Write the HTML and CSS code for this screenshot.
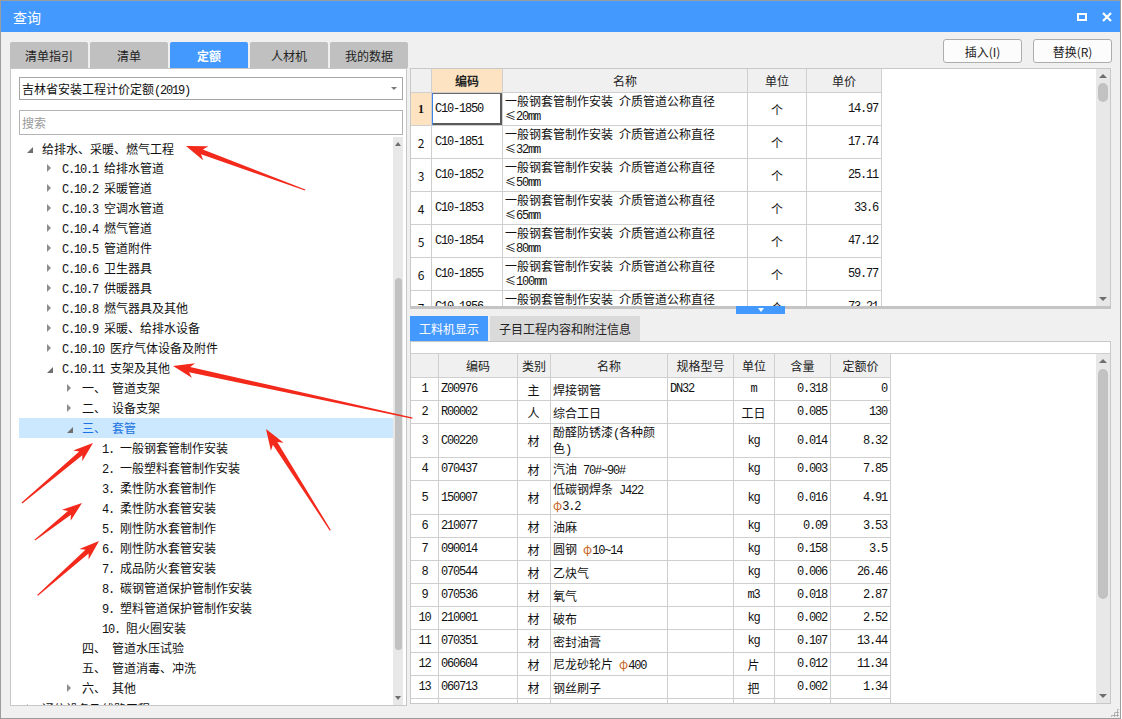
FILE: index.html
```html
<!DOCTYPE html>
<html lang="zh-CN">
<head>
<meta charset="utf-8">
<title>查询</title>
<link rel="stylesheet" href="styles.css">
</head>
<body>
<div class="window">
  <div class="titlebar">
    <span class="title">查询</span>
    <div class="winbtns">
      <span class="ic-max"></span>
      <svg class="ic-close" width="10" height="10" viewBox="0 0 10 10"><path d="M1 1L9 9M9 1L1 9" stroke="#fff" stroke-width="2.2" fill="none"/></svg>
    </div>
  </div>

  <div class="toprow">
    <div class="tabs">
      <div class="tab">清单指引</div>
      <div class="tab">清单</div>
      <div class="tab active">定额</div>
      <div class="tab">人材机</div>
      <div class="tab">我的数据</div>
    </div>
    <div class="btns">
      <button class="btn">插入(I)</button>
      <button class="btn">替换(R)</button>
    </div>
  </div>

  <div class="main">
    <div class="left">
      <div class="combo"><span>吉林省安装工程计价定额<span class="m">(2019)</span></span><i class="caret"></i></div>
      <div class="search">搜索</div>
      <div class="tree">
        <div class="tree-list">
          <div class="node l0"><i class="tg open"></i><span class="tx">给排水、采暖、燃气工程</span></div>
          <div class="node l1"><i class="tg shut"></i><span class="tx"><span class="m">C.10.1 </span>给排水管道</span></div>
          <div class="node l1"><i class="tg shut"></i><span class="tx"><span class="m">C.10.2 </span>采暖管道</span></div>
          <div class="node l1"><i class="tg shut"></i><span class="tx"><span class="m">C.10.3 </span>空调水管道</span></div>
          <div class="node l1"><i class="tg shut"></i><span class="tx"><span class="m">C.10.4 </span>燃气管道</span></div>
          <div class="node l1"><i class="tg shut"></i><span class="tx"><span class="m">C.10.5 </span>管道附件</span></div>
          <div class="node l1"><i class="tg shut"></i><span class="tx"><span class="m">C.10.6 </span>卫生器具</span></div>
          <div class="node l1"><i class="tg shut"></i><span class="tx"><span class="m">C.10.7 </span>供暖器具</span></div>
          <div class="node l1"><i class="tg shut"></i><span class="tx"><span class="m">C.10.8 </span>燃气器具及其他</span></div>
          <div class="node l1"><i class="tg shut"></i><span class="tx"><span class="m">C.10.9 </span>采暖、给排水设备</span></div>
          <div class="node l1"><i class="tg shut"></i><span class="tx"><span class="m">C.10.10 </span>医疗气体设备及附件</span></div>
          <div class="node l1"><i class="tg open"></i><span class="tx"><span class="m">C.10.11 </span>支架及其他</span></div>
          <div class="node l2"><i class="tg shut"></i><span class="tx">一、<span class="m"> </span>管道支架</span></div>
          <div class="node l2"><i class="tg shut"></i><span class="tx">二、<span class="m"> </span>设备支架</span></div>
          <div class="node l2 sel"><i class="tg open"></i><span class="tx">三、<span class="m"> </span>套管</span></div>
          <div class="node l3"><i class="tg"></i><span class="tx"><span class="m">1. </span>一般钢套管制作安装</span></div>
          <div class="node l3"><i class="tg"></i><span class="tx"><span class="m">2. </span>一般塑料套管制作安装</span></div>
          <div class="node l3"><i class="tg"></i><span class="tx"><span class="m">3. </span>柔性防水套管制作</span></div>
          <div class="node l3"><i class="tg"></i><span class="tx"><span class="m">4. </span>柔性防水套管安装</span></div>
          <div class="node l3"><i class="tg"></i><span class="tx"><span class="m">5. </span>刚性防水套管制作</span></div>
          <div class="node l3"><i class="tg"></i><span class="tx"><span class="m">6. </span>刚性防水套管安装</span></div>
          <div class="node l3"><i class="tg"></i><span class="tx"><span class="m">7. </span>成品防火套管安装</span></div>
          <div class="node l3"><i class="tg"></i><span class="tx"><span class="m">8. </span>碳钢管道保护管制作安装</span></div>
          <div class="node l3"><i class="tg"></i><span class="tx"><span class="m">9. </span>塑料管道保护管制作安装</span></div>
          <div class="node l3"><i class="tg"></i><span class="tx"><span class="m">10. </span>阻火圈安装</span></div>
          <div class="node l2"><i class="tg"></i><span class="tx">四、<span class="m"> </span>管道水压试验</span></div>
          <div class="node l2"><i class="tg"></i><span class="tx">五、<span class="m"> </span>管道消毒、冲洗</span></div>
          <div class="node l2"><i class="tg shut"></i><span class="tx">六、<span class="m"> </span>其他</span></div>
          <div class="node l0"><i class="tg shut"></i><span class="tx">通信设备及线路工程</span></div>
        </div>
        <div class="vs vs-tree"><i class="sa up"></i><div class="trk"><div class="th"></div></div><i class="sa dn"></i></div>
      </div>
    </div>

    <div class="right">
      <div class="upper">
        <div class="gridwrap">
          <table class="grid up">
            <colgroup><col class="c0"><col class="c1"><col class="c2"><col class="c3"><col class="c4"></colgroup>
            <thead>
              <tr><th></th><th class="hot">编码</th><th>名称</th><th>单位</th><th>单价</th></tr>
            </thead>
            <tbody>
              <tr><td class="rn hotn">1</td><td class="m cur">C10-1850</td><td class="nm">一般钢套管制作安装<span class="sp"></span>介质管道公称直径<br><span class="l2t">≤<span class="m">20mm</span></span></td><td class="ct">个</td><td class="m rt">14.97</td></tr>
              <tr><td class="rn">2</td><td class="m">C10-1851</td><td class="nm">一般钢套管制作安装<span class="sp"></span>介质管道公称直径<br><span class="l2t">≤<span class="m">32mm</span></span></td><td class="ct">个</td><td class="m rt">17.74</td></tr>
              <tr><td class="rn">3</td><td class="m">C10-1852</td><td class="nm">一般钢套管制作安装<span class="sp"></span>介质管道公称直径<br><span class="l2t">≤<span class="m">50mm</span></span></td><td class="ct">个</td><td class="m rt">25.11</td></tr>
              <tr><td class="rn">4</td><td class="m">C10-1853</td><td class="nm">一般钢套管制作安装<span class="sp"></span>介质管道公称直径<br><span class="l2t">≤<span class="m">65mm</span></span></td><td class="ct">个</td><td class="m rt">33.6</td></tr>
              <tr><td class="rn">5</td><td class="m">C10-1854</td><td class="nm">一般钢套管制作安装<span class="sp"></span>介质管道公称直径<br><span class="l2t">≤<span class="m">80mm</span></span></td><td class="ct">个</td><td class="m rt">47.12</td></tr>
              <tr><td class="rn">6</td><td class="m">C10-1855</td><td class="nm">一般钢套管制作安装<span class="sp"></span>介质管道公称直径<br><span class="l2t">≤<span class="m">100mm</span></span></td><td class="ct">个</td><td class="m rt">59.77</td></tr>
              <tr><td class="rn">7</td><td class="m">C10-1856</td><td class="nm">一般钢套管制作安装<span class="sp"></span>介质管道公称直径<br><span class="l2t">≤<span class="m">125mm</span></span></td><td class="ct">个</td><td class="m rt">73.21</td></tr>
            </tbody>
          </table>
        </div>
        <div class="vs vs-up"><i class="sa up"></i><div class="trk"><div class="th"></div></div><i class="sa dn"></i></div>
      </div>

      <div class="splitter"><div class="handle"><i></i></div></div>

      <div class="ltabs">
        <div class="ltab active">工料机显示</div>
        <div class="ltab wide">子目工程内容和附注信息</div>
      </div>

      <div class="lower">
        <div class="strip"></div>
        <div class="lbody">
          <div class="gridwrap">
            <table class="grid lo">
              <colgroup><col class="d0"><col class="d1"><col class="d2"><col class="d3"><col class="d4"><col class="d5"><col class="d6"><col class="d7"></colgroup>
              <thead>
                <tr><th></th><th>编码</th><th>类别</th><th>名称</th><th>规格型号</th><th>单位</th><th>含量</th><th>定额价</th></tr>
              </thead>
              <tbody>
                <tr><td class="rn m">1</td><td class="m">Z00976</td><td class="ct">主</td><td>焊接钢管</td><td class="m">DN32</td><td class="ct m">m</td><td class="m rt">0.318</td><td class="m rt">0</td></tr>
                <tr><td class="rn m">2</td><td class="m">R00002</td><td class="ct">人</td><td>综合工日</td><td></td><td class="ct">工日</td><td class="m rt">0.085</td><td class="m rt">130</td></tr>
                <tr class="dbl"><td class="rn m">3</td><td class="m">C00220</td><td class="ct">材</td><td class="wr">酚醛防锈漆<span class="m">(</span>各种颜<br>色<span class="m">)</span></td><td></td><td class="ct m">kg</td><td class="m rt">0.014</td><td class="m rt">8.32</td></tr>
                <tr><td class="rn m">4</td><td class="m">070437</td><td class="ct">材</td><td>汽油<span class="m"> 70#~90#</span></td><td></td><td class="ct m">kg</td><td class="m rt">0.003</td><td class="m rt">7.85</td></tr>
                <tr class="dbl"><td class="rn m">5</td><td class="m">150007</td><td class="ct">材</td><td class="wr">低碳钢焊条<span class="m"> J422</span><br><span class="phi">φ</span><span class="m">3.2</span></td><td></td><td class="ct m">kg</td><td class="m rt">0.016</td><td class="m rt">4.91</td></tr>
                <tr><td class="rn m">6</td><td class="m">210077</td><td class="ct">材</td><td>油麻</td><td></td><td class="ct m">kg</td><td class="m rt">0.09</td><td class="m rt">3.53</td></tr>
                <tr><td class="rn m">7</td><td class="m">090014</td><td class="ct">材</td><td>圆钢<span class="m"> </span><span class="phi">φ</span><span class="m">10~14</span></td><td></td><td class="ct m">kg</td><td class="m rt">0.158</td><td class="m rt">3.5</td></tr>
                <tr><td class="rn m">8</td><td class="m">070544</td><td class="ct">材</td><td>乙炔气</td><td></td><td class="ct m">kg</td><td class="m rt">0.006</td><td class="m rt">26.46</td></tr>
                <tr><td class="rn m">9</td><td class="m">070536</td><td class="ct">材</td><td>氧气</td><td></td><td class="ct m">m3</td><td class="m rt">0.018</td><td class="m rt">2.87</td></tr>
                <tr><td class="rn m">10</td><td class="m">210001</td><td class="ct">材</td><td>破布</td><td></td><td class="ct m">kg</td><td class="m rt">0.002</td><td class="m rt">2.52</td></tr>
                <tr><td class="rn m">11</td><td class="m">070351</td><td class="ct">材</td><td>密封油膏</td><td></td><td class="ct m">kg</td><td class="m rt">0.107</td><td class="m rt">13.44</td></tr>
                <tr><td class="rn m">12</td><td class="m">060604</td><td class="ct">材</td><td>尼龙砂轮片<span class="m"> </span><span class="phi">φ</span><span class="m">400</span></td><td></td><td class="ct">片</td><td class="m rt">0.012</td><td class="m rt">11.34</td></tr>
                <tr><td class="rn m">13</td><td class="m">060713</td><td class="ct">材</td><td>钢丝刷子</td><td></td><td class="ct">把</td><td class="m rt">0.002</td><td class="m rt">1.34</td></tr>
                <tr class="cut"><td></td><td></td><td></td><td></td><td></td><td></td><td></td><td></td></tr>
              </tbody>
            </table>
          </div>
          <div class="vs vs-lo"><i class="sa up"></i><div class="trk"><div class="th"></div></div><i class="sa dn"></i></div>
        </div>
      </div>
    </div>
  </div>
  <i class="grip"></i>
</div>

<svg class="arrows" width="1122" height="719" viewBox="0 0 1122 719">
  <g fill="#f2291b">
    <polygon transform="translate(186,146) rotate(200.3)" points="0,0 -21,-7.5 -17,-2.6 -127,-0.6 -127,0.6 -17,2.6 -21,7.5"/>
    <polygon transform="translate(173,366) rotate(192.3)" points="0,0 -21,-7.5 -17,-2.6 -245,-0.6 -245,0.6 -17,2.6 -21,7.5"/>
    <polygon transform="translate(266,429) rotate(237.6)" points="0,0 -21,-7.5 -17,-2.6 -120,-0.6 -120,0.6 -17,2.6 -21,7.5"/>
    <polygon transform="translate(93,443) rotate(-40.2)" points="0,0 -20,-7 -16,-2.4 -93,-0.6 -93,0.6 -16,2.4 -20,7"/>
    <polygon transform="translate(82,503) rotate(-38.2)" points="0,0 -20,-7 -16,-2.4 -60,-0.6 -60,0.6 -16,2.4 -20,7"/>
    <polygon transform="translate(99,541) rotate(-41.5)" points="0,0 -20,-7 -16,-2.4 -82,-0.6 -82,0.6 -16,2.4 -20,7"/>
  </g>
</svg>
</body>
</html>
```

FILE: styles.css
```css
* { box-sizing: border-box; margin: 0; padding: 0; }

body {
  width: 1122px;
  height: 719px;
  overflow: hidden;
  position: relative;
  background: #ffffff;
  font-family: "Noto Sans CJK SC", "Noto Sans", sans-serif;
  font-size: 12px;
  color: #1a1a1a;
}

.window {
  width: 1121px;
  height: 719px;
  border: 1px solid #9c9c9c;
  background: #f0f0f0;
  display: flex;
  flex-direction: column;
  position: relative;
  overflow: hidden;
}

/* title bar */
.titlebar {
  height: 31px;
  flex-shrink: 0;
  background: #4499ff;
  color: #fff;
  display: flex;
  align-items: center;
  padding: 0 8px 0 12px;
  font-size: 14px;
}
.title { flex: 1; }
.winbtns { display: flex; align-items: center; gap: 15px; }
.ic-max { width: 10px; height: 8px; border: 2px solid #fff; display: block; }
.ic-close { display: block; }

/* top row */
.toprow {
  height: 36px;
  flex-shrink: 0;
  display: flex;
  justify-content: space-between;
  padding: 0 8px 0 9px;
}
.tabs { display: flex; gap: 2px; align-self: flex-end; }
.tab {
  width: 78px;
  height: 26px;
  background: #c0c0c0;
  border-radius: 2px 2px 0 0;
  display: flex;
  align-items: center;
  justify-content: center;
  color: #222;
}
.tab.active { background: #4499ff; color: #fff; font-weight: bold; }

.btns { display: flex; gap: 11px; margin-top: 7px; }
.btn {
  width: 79px;
  height: 24px;
  border: 1px solid #adadad;
  border-radius: 3px;
  background: #fcfcfc;
  font-family: "Noto Sans CJK SC", "Noto Sans", sans-serif;
  font-size: 12px;
  color: #222;
}

/* main */
.main {
  height: 638px;
  flex-shrink: 0;
  display: flex;
  padding-left: 9px;
}

.left {
  width: 397px;
  height: 638px;
  border: 1px solid #c6c6c6;
  background: #fff;
  padding: 8px 3px 0 8px;
  display: flex;
  flex-direction: column;
}
.combo {
  height: 23px;
  flex-shrink: 0;
  border: 1px solid #a6a6a6;
  display: flex;
  align-items: center;
  justify-content: space-between;
  padding: 0 5px 0 2px;
  color: #111;
}
.caret {
  width: 0; height: 0;
  border-top: 3px solid #7a7a7a;
  border-left: 3px solid transparent;
  border-right: 3px solid transparent;
}
.search {
  height: 25px;
  flex-shrink: 0;
  margin-top: 10px;
  border: 1px solid #b4b4b4;
  display: flex;
  align-items: center;
  padding-left: 2px;
  color: #9a9a9a;
}
.tree {
  margin-top: 2px;
  flex: 1;
  min-height: 0;
  display: flex;
}
.tree-list {
  flex: 1;
  overflow: hidden;
  padding-top: 1px;
}
.node {
  height: 20px;
  display: flex;
  align-items: center;
  white-space: nowrap;
  color: #111;
}
.l0 { padding-left: 8px; }
.l1 { padding-left: 28px; }
.l2 { padding-left: 48px; }
.l3 { padding-left: 68px; }
.node.sel { background: #cce8ff; color: #1a73e0; }
.tg {
  width: 15px;
  height: 20px;
  flex-shrink: 0;
  display: flex;
  align-items: center;
}
.tg.shut::before {
  content: "";
  width: 0; height: 0;
  border-left: 4px solid #8c8c8c;
  border-top: 4px solid transparent;
  border-bottom: 4px solid transparent;
}
.tg.open::before {
  content: "";
  width: 0; height: 0;
  margin-top: 3px;
  border-bottom: 6px solid #6e6e6e;
  border-left: 6px solid transparent;
}

.m {
  font-family: "Liberation Mono", monospace;
  font-size: 12px;
  letter-spacing: -1.2px;
  white-space: pre;
}
.sp { display: inline-block; width: 6px; }

/* scrollbars */
.vs {
  width: 14px;
  flex-shrink: 0;
  background: #e8e8e8;
  display: flex;
  flex-direction: column;
  align-items: center;
}
.sa {
  height: 14px;
  width: 100%;
  flex-shrink: 0;
  display: flex;
  align-items: center;
  justify-content: center;
}
.sa.up::before {
  content: "";
  border-bottom: 4px solid #6e6e6e;
  border-left: 4px solid transparent;
  border-right: 4px solid transparent;
}
.sa.dn::before {
  content: "";
  border-top: 4px solid #6e6e6e;
  border-left: 4px solid transparent;
  border-right: 4px solid transparent;
}
.trk { flex: 1; width: 100%; display: flex; justify-content: center; }
.th { width: 10px; border-radius: 5px; background: #c2c2c2; }

.vs-tree { width: 10px; }
.vs-tree .sa.up::before, .vs-tree .sa.dn::before { border-left-width: 3px; border-right-width: 3px; }
.vs-tree .th { width: 7px; height: 372px; margin-top: 127px; border-radius: 4px; }
.vs-up .th { height: 19px; }
.vs-lo .th { height: 230px; margin-top: 1px; }

/* right */
.right {
  width: 701px;
  height: 636px;
  margin-left: 3px;
  display: flex;
  flex-direction: column;
}
.upper {
  height: 238px;
  flex-shrink: 0;
  border: 1px solid #c8c8c8;
  border-bottom: none;
  background: #fff;
  display: flex;
}
.gridwrap { flex: 1; overflow: hidden; background: #fff; }

.grid {
  border-collapse: separate;
  border-spacing: 0;
  table-layout: fixed;
  font-size: 12px;
  color: #111;
}
.grid th, .grid td {
  border-right: 1px solid #cfcfcf;
  border-bottom: 1px solid #cfcfcf;
  padding: 0 3px;
  white-space: nowrap;
  overflow: hidden;
  font-weight: normal;
  vertical-align: middle;
  text-align: left;
}
.grid th { background: #f0f0f0; text-align: center; color: #222; }
.grid .ct { text-align: center; }
.grid .rt { text-align: right; }
.grid .rn { text-align: center; padding: 0; }

.up { width: 471px; }
.up .c0 { width: 21px; }
.up .c1 { width: 71px; }
.up .c2 { width: 245px; }
.up .c3 { width: 59px; }
.up .c4 { width: 75px; }
.up thead tr { height: 24px; }
.up tbody tr { height: 33px; }
.up .nm { line-height: 14px; padding-left: 2px; }
.up .l2t { font-size: 11px; }
.up th.hot { background: #fde3c1; font-weight: bold; }
.up td.hotn { background: #fde3c1; font-weight: bold; font-family: "Liberation Serif", serif; font-size: 12px; }
.up td.cur { box-shadow: inset 1px 0 #3b86e8, inset 0 1px #6a6a6a, inset -2px -2px #5a5a5a; }

.splitter {
  height: 8px;
  flex-shrink: 0;
  background: linear-gradient(#c4c4c4 0 3px, #f0f0f0 3px);
  display: flex;
  justify-content: center;
}
.handle {
  width: 49px;
  height: 8px;
  background: #4499ff;
  display: flex;
  justify-content: center;
  padding-top: 2px;
}
.handle i {
  width: 0; height: 0;
  border-top: 4px solid #fff;
  border-left: 3px solid transparent;
  border-right: 3px solid transparent;
}

.ltabs { display: flex; gap: 2px; height: 25px; margin-top: 2px; flex-shrink: 0; }
.ltab {
  width: 78px;
  background: #dadada;
  display: flex;
  align-items: center;
  justify-content: center;
  color: #222;
  font-size: 12px;
}
.ltab.active { background: #4499ff; color: #fff; }
.ltab.wide { width: 150px; }

.lower {
  flex: 1;
  min-height: 0;
  border: 1px solid #c8c8c8;
  background: #fff;
  display: flex;
  flex-direction: column;
}
.strip { height: 12px; flex-shrink: 0; border-bottom: 1px solid #cfcfcf; }
.lbody { flex: 1; min-height: 0; display: flex; }

.lo { width: 480px; }
.lo .d0 { width: 28px; }
.lo .d1 { width: 79px; }
.lo .d2 { width: 33px; }
.lo .d3 { width: 117px; }
.lo .d4 { width: 66px; }
.lo .d5 { width: 41px; }
.lo .d6 { width: 56px; }
.lo .d7 { width: 60px; }
.lo thead tr { height: 24px; }
.lo tbody tr { height: 23px; }
.lo tbody tr.dbl { height: 34px; }
.lo td { padding: 0 3px 0 2px; }
.lo td.rt { padding-right: 3px; }
.lo td.wr { line-height: 14px; }
.phi { color: #c8641e; }

.grip {
  position: absolute;
  right: 1px;
  bottom: 1px;
  width: 9px;
  height: 9px;
  background: radial-gradient(circle, #9a9a9a 0.9px, transparent 1.2px) 0 0 / 3px 3px;
  clip-path: polygon(100% 0, 100% 100%, 0 100%);
}

.arrows {
  position: absolute;
  left: 0;
  top: 0;
  pointer-events: none;
}
```
